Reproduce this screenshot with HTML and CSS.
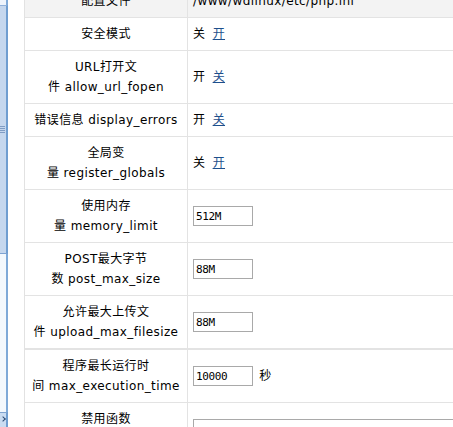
FILE: index.html
```html
<!DOCTYPE html>
<html lang="zh-CN">
<head>
<meta charset="utf-8">
<title>PHP 配置</title>
<link rel="stylesheet" href="styles.css">
</head>
<body>
<div class="page">
  <div class="scrollbar">
    <div class="sb-track-top"></div>
    <div class="sb-thumb"><span class="sb-grip"></span></div>
    <div class="sb-track"></div>
    <div class="sb-button"><span class="sb-arrow"></span></div>
  </div>
  <div class="content">
    <table class="conf">
      <tr class="head">
        <td class="label">配置文件</td>
        <td class="value">/www/wdlinux/etc/php.ini</td>
      </tr>
      <tr>
        <td class="label">安全模式</td>
        <td class="value">关 <a class="toggle" href="#">开</a></td>
      </tr>
      <tr>
        <td class="label">URL打开文<br>件 allow_url_fopen</td>
        <td class="value">开 <a class="toggle" href="#">关</a></td>
      </tr>
      <tr>
        <td class="label">错误信息 display_errors</td>
        <td class="value">开 <a class="toggle" href="#">关</a></td>
      </tr>
      <tr>
        <td class="label">全局变<br>量 register_globals</td>
        <td class="value">关 <a class="toggle" href="#">开</a></td>
      </tr>
      <tr>
        <td class="label">使用内存<br>量 memory_limit</td>
        <td class="value"><input class="field" type="text" value="512M"></td>
      </tr>
      <tr>
        <td class="label">POST最大字节<br>数 post_max_size</td>
        <td class="value"><input class="field" type="text" value="88M"></td>
      </tr>
      <tr class="thick">
        <td class="label">允许最大上传文<br>件 upload_max_filesize</td>
        <td class="value"><input class="field" type="text" value="88M"></td>
      </tr>
      <tr>
        <td class="label">程序最长运行时<br>间 max_execution_time</td>
        <td class="value"><input class="field" type="text" value="10000"> <span class="unit">秒</span></td>
      </tr>
      <tr class="last">
        <td class="label">禁用函数<br>disable_functions</td>
        <td class="value"><textarea class="area"></textarea></td>
      </tr>
    </table>
  </div>
</div>
</body>
</html>
```

FILE: styles.css
```css
html, body {
  margin: 0;
  padding: 0;
  background: #ffffff;
}

.page {
  display: flex;
  height: 427px;
  overflow: hidden;
}

/* partial scrollbar of the neighbouring frame */
.scrollbar {
  width: 8px;
  flex: 0 0 8px;
  display: flex;
  flex-direction: column;
}

.sb-track-top {
  height: 5px;
  background: #eef4fc;
  border-right: 2px solid #7ea9d8;
}

.sb-thumb {
  height: 247px;
  background: #c5d7ee;
  border-top: 1px solid #8fb0da;
  border-bottom: 1px solid #7ea3d2;
  border-right: 2px solid #6f9dd0;
  display: flex;
  align-items: center;
}

.sb-grip {
  display: block;
  width: 5px;
  height: 7px;
  background: repeating-linear-gradient(to bottom, #7f9cc4 0, #7f9cc4 1px, transparent 1px, transparent 2px);
}

.sb-track {
  flex: 1;
  background: #f3f8fd;
  border-right: 2px solid #7ea9d8;
}

.sb-button {
  height: 14px;
  background: #cadcf1;
  border-top: 1px solid #7fa3cf;
  border-right: 2px solid #6f9dd0;
  position: relative;
}

.sb-arrow {
  position: absolute;
  left: 1px;
  top: 4px;
  width: 3px;
  height: 3px;
  border-right: 1px solid #2c4a72;
  border-bottom: 1px solid #2c4a72;
  transform: rotate(-45deg);
}

.content {
  flex: 1;
  margin-left: 16px;
  overflow: hidden;
}

.conf {
  margin-top: -15px;
  width: 640px;
  border-collapse: separate;
  border-spacing: 0;
  border-left: 1px solid #e2e2e2;
  font-family: "DejaVu Sans", "Noto Sans CJK SC", sans-serif;
  font-size: 12px;
  line-height: 20px;
  letter-spacing: 0.4px;
  color: #000000;
}

.conf td {
  padding: 6px 5px;
  border-bottom: 1px solid #e3e3e3;
  vertical-align: middle;
}

.conf .label {
  box-sizing: border-box;
  width: 163px;
  text-align: center;
  border-right: 1px solid #e3e3e3;
}

.conf .value {
  text-align: left;
}

.head td {
  background: #f3f3f3;
}

.thick td {
  border-bottom: 2px solid #e3e3e3;
}

.last td {
  vertical-align: top;
}

.toggle {
  color: #1d4f8c;
  text-decoration: underline;
  margin-left: 3px;
}

.field {
  box-sizing: border-box;
  width: 60px;
  height: 20px;
  margin: 0;
  padding: 0 2px;
  border: 1px solid #a9a9a9;
  font-family: "DejaVu Sans Mono", monospace;
  font-size: 11px;
  letter-spacing: -0.4px;
  color: #000000;
  vertical-align: middle;
  background: #ffffff;
}

.unit {
  margin-left: 2px;
}

.area {
  display: block;
  box-sizing: border-box;
  margin-top: 10px;
  width: 320px;
  height: 80px;
  border: 1px solid #a9a9a9;
  resize: none;
}
```
